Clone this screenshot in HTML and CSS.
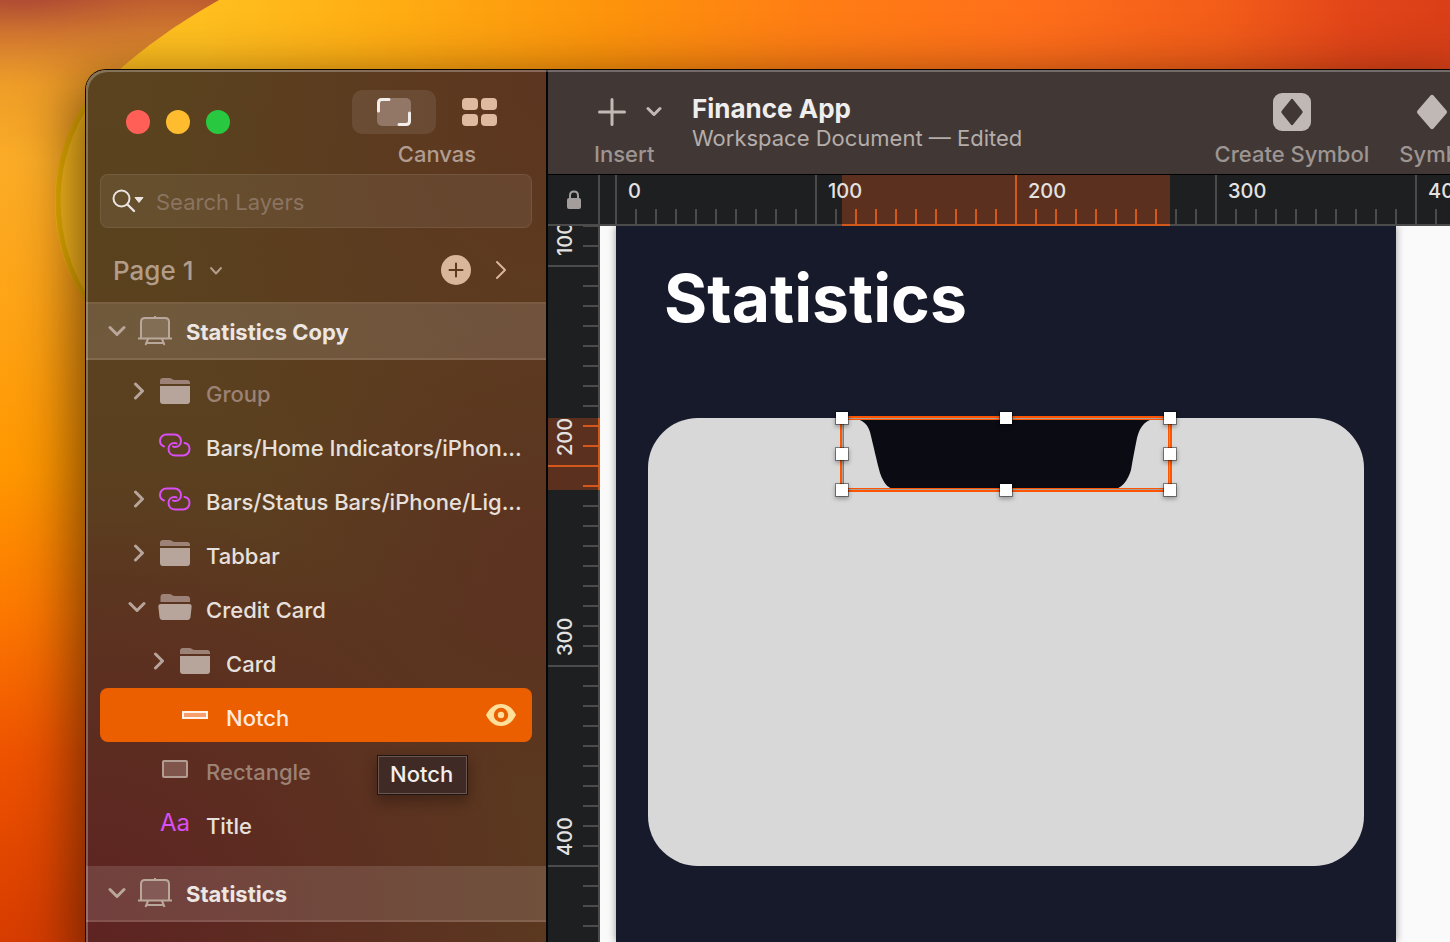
FILE: index.html
```html
<!DOCTYPE html>
<html lang="en">
<head>
<meta charset="utf-8">
<title>Finance App</title>
<link rel="stylesheet" href="styles.css">
</head>
<body>
<svg class="defs" aria-hidden="true">
  <symbol id="down" viewBox="0 0 18 12"><path d="M2 2.500 9 9.500 16 2.500" fill="none" stroke="currentColor" stroke-width="3" stroke-linecap="round" stroke-linejoin="round"/></symbol>
  <symbol id="right" viewBox="0 0 12 18"><path d="M2.500 2 9.500 9 2.500 16" fill="none" stroke="currentColor" stroke-width="3" stroke-linecap="round" stroke-linejoin="round"/></symbol>
  <symbol id="folder" viewBox="0 0 34 28">
    <path d="M2 7V4Q2 1 5 1H11Q13 1 14 2T17 3H29Q32 3 32 6V7Z" fill="#9d8377"/>
    <path d="M2 9H32V24Q32 27 29 27H5Q2 27 2 24Z" fill="#b7a59b"/>
  </symbol>
  <symbol id="folder-open" viewBox="0 0 34 28">
    <path d="M2.500 9V4Q2.500 1 5.500 1H11Q13 1 14 2T17 3H29Q32 3 32 6V9Z" fill="#9d8377"/>
    <path d="M3 11H31Q34 11 33.600 14L32.500 24Q32 27 29.500 27H4.500Q2 27 1.500 24L.4 14Q0 11 3 11Z" fill="#b7a59b"/>
  </symbol>
  <symbol id="artboard" viewBox="0 0 34 30">
    <path d="M3 22V6Q3 2 7 2H27Q31 2 31 6V22Z" fill="#ffffff" fill-opacity=".13"/>
    <path d="M3 22V6Q3 2 7 2H27Q31 2 31 6V22M0 22.500H34M17 0V2M10 23 7.500 29M24 23 26.500 29M9 27H25" fill="none" stroke="#baa79b" stroke-width="2"/>
  </symbol>
  <symbol id="link" viewBox="0 0 32 24">
    <g fill="none" stroke="#d94ff5" stroke-width="2" stroke-linecap="round">
      <path d="M5 13.500C2.500 12.500 1 10.500 1 8C1 4 4 1.500 7.500 1.500H15.500C19.500 1.500 22 4.500 22 8C22 11.500 19.500 14 16 14Q14.500 14 14 13.500"/>
      <path d="M25.500 10C28.500 10.500 30.500 13 30.500 16C30.500 20 27.500 22.500 24 22.500H16.500C12.500 22.500 9.500 20 9.500 16C9.500 12.500 12 10 15.500 10Q17 10 17.500 10.500"/>
    </g>
  </symbol>
</svg>

<svg class="wallpaper" viewBox="0 0 1450 942" preserveAspectRatio="none" aria-hidden="true">
  <defs>
    <linearGradient id="base" x1="0" y1="0" x2="0" y2="1">
      <stop offset="0" stop-color="#b9562f"/><stop offset=".03" stop-color="#cf7630"/><stop offset=".09" stop-color="#ee9d28"/><stop offset=".17" stop-color="#fbac27"/>
      <stop offset=".32" stop-color="#fea417"/><stop offset=".5" stop-color="#ff9700"/><stop offset=".65" stop-color="#fc7800"/><stop offset=".8" stop-color="#ee5300"/><stop offset="1" stop-color="#d73c00"/>
    </linearGradient>
    <linearGradient id="petal" gradientUnits="userSpaceOnUse" x1="200" y1="40" x2="1450" y2="90">
      <stop offset="0" stop-color="#ffbf1f"/><stop offset=".14" stop-color="#ffae13"/><stop offset=".32" stop-color="#fd940b"/><stop offset=".48" stop-color="#ff7e14"/><stop offset=".66" stop-color="#ff6f1a"/><stop offset=".82" stop-color="#f25c19"/><stop offset=".92" stop-color="#e24519"/><stop offset="1" stop-color="#d93f18"/>
    </linearGradient>
    <radialGradient id="dusk" gradientUnits="userSpaceOnUse" cx="0" cy="0" r="1" gradientTransform="translate(20 -22) scale(230 85)">
      <stop offset="0" stop-color="#a53d37"/><stop offset=".3" stop-color="#b04d34" stop-opacity=".8"/><stop offset="1" stop-color="#e08a2b" stop-opacity="0"/>
    </radialGradient>
  </defs>
  <rect width="1450" height="942" fill="url(#base)"/>
  <rect width="400" height="120" fill="url(#dusk)"/>
  <path d="M219 0C175 25 145 47 118 71C75 110 55 155 55 200C55 245 68 278 90 306H1450V0Z" fill="url(#petal)"/>
  <path d="M92 96C68 130 58 165 58 200C58 240 70 275 90 304" fill="none" stroke="#e8b000" stroke-width="5"/>
</svg>

<div class="desktop">
  <div class="window">
    <aside class="sidebar">
      <header class="titlebar">
        <div class="lights">
          <button class="light close" aria-label="Close"></button>
          <button class="light minimise" aria-label="Minimise"></button>
          <button class="light zoom" aria-label="Zoom"></button>
        </div>
        <div class="views">
          <div class="view-buttons">
            <button class="view active" aria-label="Canvas view">
              <svg width="34" height="28" viewBox="0 0 34 28"><rect width="34" height="28" rx="5" fill="#927767"/><path d="M1.500 13V5Q1.500 1.500 5 1.500H12M32.500 15V23Q32.500 26.500 29 26.500H22" fill="none" stroke="#f3eeea" stroke-width="3" stroke-linecap="round"/></svg>
            </button>
            <button class="view" aria-label="Components view">
              <svg width="36" height="28" viewBox="0 0 36 28" fill="#dfb9a0"><rect width="16" height="12" rx="4"/><rect x="19" width="16" height="12" rx="4"/><rect y="16" width="16" height="12" rx="4"/><rect x="19" y="16" width="16" height="12" rx="4"/></svg>
            </button>
          </div>
          <span class="caption">Canvas</span>
        </div>
      </header>

      <label class="search">
        <svg width="32" height="24" viewBox="0 0 32 24"><circle cx="9.500" cy="9.500" r="8" fill="none" stroke="#ece4e0" stroke-width="2"/><path d="M15.500 15.500 22 22" stroke="#ece4e0" stroke-width="2.400" stroke-linecap="round"/><path d="M23 8.500H31L27 13.500Z" fill="#ece4e0" stroke="#ece4e0" stroke-linejoin="round"/></svg>
        <input type="search" placeholder="Search Layers" aria-label="Search Layers">
      </label>

      <div class="page">
        <button class="page-name">Page 1 <svg width="14" height="10" viewBox="0 0 14 10"><path d="M2 2 7 7.500 12 2" fill="none" stroke="currentColor" stroke-width="2" stroke-linecap="round" stroke-linejoin="round"/></svg></button>
        <button class="add" aria-label="Add page"><svg width="30" height="30" viewBox="0 0 30 30"><circle cx="15" cy="15" r="15" fill="#d9b599"/><path d="M15 8.500V21.500M8.500 15H21.500" stroke="#5b3a20" stroke-width="2" stroke-linecap="round"/></svg></button>
        <button class="next" aria-label="Show pages"><svg width="12" height="20" viewBox="0 0 12 20"><path d="M2 2 10 10 2 18" fill="none" stroke="#d9b599" stroke-width="2" stroke-linecap="round" stroke-linejoin="round"/></svg></button>
      </div>

      <h2 class="artboard-row first">
        <button class="toggle" aria-label="Collapse Statistics Copy"><svg width="18" height="12"><use href="#down"/></svg></button>
        <svg class="board" width="34" height="30"><use href="#artboard"/></svg>
        <span>Statistics Copy</span>
      </h2>
      <ul class="layers">
        <li class="layer dim">
          <button class="toggle" aria-label="Expand Group"><svg width="12" height="18"><use href="#right"/></svg></button>
          <svg class="kind" width="34" height="28"><use href="#folder"/></svg><span class="name">Group</span>
        </li>
        <li class="layer">
          <span class="toggle"></span>
          <svg class="kind" width="32" height="24"><use href="#link"/></svg><span class="name">Bars/Home Indicators/iPhon...</span>
        </li>
        <li class="layer">
          <button class="toggle" aria-label="Expand status bar"><svg width="12" height="18"><use href="#right"/></svg></button>
          <svg class="kind" width="32" height="24"><use href="#link"/></svg><span class="name">Bars/Status Bars/iPhone/Lig...</span>
        </li>
        <li class="layer">
          <button class="toggle" aria-label="Expand Tabbar"><svg width="12" height="18"><use href="#right"/></svg></button>
          <svg class="kind" width="34" height="28"><use href="#folder"/></svg><span class="name">Tabbar</span>
        </li>
        <li class="layer">
          <button class="toggle open" aria-label="Collapse Credit Card"><svg width="18" height="12"><use href="#down"/></svg></button>
          <svg class="kind" width="34" height="28"><use href="#folder-open"/></svg><span class="name">Credit Card</span>
        </li>
        <li class="layer nested">
          <button class="toggle" aria-label="Expand Card"><svg width="12" height="18"><use href="#right"/></svg></button>
          <svg class="kind" width="34" height="28"><use href="#folder"/></svg><span class="name">Card</span>
        </li>
        <li class="layer nested selected">
          <span class="toggle"></span>
          <svg class="kind" width="34" height="28" viewBox="0 0 34 28"><rect x="5" y="11" width="24" height="6" fill="#f79e6c" stroke="#fff3ec" stroke-width="2"/></svg><span class="name">Notch</span>
          <button class="eye" aria-label="Hide layer"><svg width="30" height="24" viewBox="0 0 30 24"><path d="M0 12C4 4 9.500 1 15 1S26 4 30 12C26 20 20.500 23 15 23S4 20 0 12Z" fill="#ffdf9a"/><circle cx="15" cy="12" r="5.200" fill="#ffdf9a" stroke="#eb5f00" stroke-width="4"/></svg></button>
          <span class="tooltip" role="tooltip">Notch</span>
        </li>
        <li class="layer dim">
          <span class="toggle"></span>
          <svg class="kind" width="34" height="28" viewBox="0 0 34 28"><rect x="5" y="6" width="24" height="16" rx="1" fill="#80564c" stroke="#b39d93" stroke-width="2"/></svg><span class="name">Rectangle</span>
        </li>
        <li class="layer">
          <span class="toggle"></span>
          <span class="kind type">Aa</span><span class="name">Title</span>
        </li>
      </ul>
      <h2 class="artboard-row">
        <button class="toggle" aria-label="Collapse Statistics"><svg width="18" height="12"><use href="#down"/></svg></button>
        <svg class="board" width="34" height="30"><use href="#artboard"/></svg>
        <span>Statistics</span>
      </h2>
    </aside>

    <main class="main">
      <header class="toolbar">
        <button class="tool insert">
          <span class="tool-icon">
            <svg width="28" height="28" viewBox="0 0 28 28"><path d="M14 1.500V26.500M1.500 14H26.500" stroke="#c3b9b5" stroke-width="3" stroke-linecap="round"/></svg>
            <svg width="16" height="12" viewBox="0 0 16 12"><path d="M2 2.500 8 8.500 14 2.500" fill="none" stroke="#c3b9b5" stroke-width="3" stroke-linecap="round" stroke-linejoin="round"/></svg>
          </span>
          <span class="caption">Insert</span>
        </button>
        <div class="document">
          <h1>Finance App</h1>
          <p>Workspace Document — Edited</p>
        </div>
        <button class="tool create">
          <span class="tool-icon"><svg width="38" height="38" viewBox="0 0 38 38"><rect width="38" height="38" rx="9" fill="#c0b8b5"/><path d="M17.500 7Q19 4.500 20.500 7L29 17.500Q30.500 19 29 20.500L20.500 31Q19 33.500 17.500 31L9 20.500Q7.500 19 9 17.500Z" fill="#413835"/></svg></span>
          <span class="caption">Create Symbol</span>
        </button>
        <button class="tool symbols">
          <span class="tool-icon"><svg width="30" height="36" viewBox="0 0 30 36"><path d="M13.500 1.500Q15 0 16.500 1.500L29 16Q31 18 29 20L16.500 34.500Q15 36 13.500 34.500L1 20Q-1 18 1 16Z" fill="#c0b8b5"/></svg></span>
          <span class="caption">Symbols</span>
        </button>
      </header>

      <div class="workspace">
        <button class="lock" aria-label="Lock rulers"><svg width="16" height="20" viewBox="0 0 16 20"><path d="M4 9V5.500C4 3 5.500 1.500 8 1.500S12 3 12 5.500V9" fill="none" stroke="#a39e9c" stroke-width="2"/><rect x="1" y="8" width="14" height="11" rx="2" fill="#a39e9c"/></svg></button>
        <div class="ruler-x">
          <div class="range-x"></div>
          <span class="mark">0</span><span class="mark">100</span><span class="mark">200</span><span class="mark">300</span><span class="mark">400</span>
        </div>
        <div class="ruler-y">
          <div class="range-y"></div>
          <span class="mark">100</span><span class="mark">200</span><span class="mark">300</span><span class="mark">400</span>
        </div>
        <div class="canvas">
          <section class="artboard">
            <h2>Statistics</h2>
            <div class="card">
              <div class="selection">
                <svg width="328" height="72" viewBox="0 0 328 72"><path d="M6 0C18 0 25 4 28 14C31 26 35 44 38 55C42 66 46 72 58 72H268C280 72 286 62 289 52C291 40 293 30 295 20C298 8 304 0 318 0Z" fill="#0b0b14"/></svg>
                <i class="handle n w"></i><i class="handle n"></i><i class="handle n e"></i>
                <i class="handle w"></i><i class="handle e"></i>
                <i class="handle s w"></i><i class="handle s"></i><i class="handle s e"></i>
              </div>
            </div>
          </section>
        </div>
      </div>
    </main>
  </div>
</div>
</body>
</html>
```

FILE: styles.css
```css
* { box-sizing: border-box; }

body {
  margin: 0;
  height: 100vh;
  overflow: hidden;
  background: #ee5300;
  color: #e8e0dc;
  font: 500 22px/28px Inter, "Liberation Sans", sans-serif;
}

h1, h2, p, ul { margin: 0; padding: 0; font: inherit; }
ul { list-style: none; }
button { padding: 0; border: 0; background: none; color: inherit; font: inherit; }
svg { display: block; flex: none; }

.defs { position: absolute; width: 0; height: 0; }
.wallpaper { position: absolute; inset: 0; width: 100%; height: 100%; }

.desktop {
  position: relative;
  display: flex;
  height: 100vh;
  padding: 70px 0 0 86px;
}

.window {
  position: relative;
  display: flex;
  flex: 1;
  min-width: 0;
  border-radius: 20px 0 0 0;
  box-shadow: 0 0 0 1px #0b0604, 0 22px 56px 12px rgba(40, 20, 0, .62);
}

/* Light rim along the window edge */
.window::after {
  content: "";
  position: absolute;
  inset: 0;
  border-radius: inherit;
  box-shadow: inset 2px 2px 0 rgba(255, 255, 255, .26);
  pointer-events: none;
}

/* Sidebar */
.sidebar {
  flex: none;
  width: 462px;
  border-right: 2px solid #050505;
  border-radius: 20px 0 0 0;
  overflow: hidden;
  background:
    radial-gradient(280px 240px at 100% 56%, rgba(92, 44, 34, .6), transparent),
    radial-gradient(400px 600px at 100% 0, #5d3520, transparent),
    radial-gradient(460px 420px at 0 98%, #5e2322, transparent),
    linear-gradient(#5a431e, #5b401f 45%, #5b381f 65%, #5b3820);
}

.titlebar {
  display: flex;
  justify-content: space-between;
  height: 104px;
  padding: 20px 24px 0 40px;
}
.lights { display: flex; gap: 16px; padding-top: 20px; }
.light { width: 24px; height: 24px; border-radius: 50%; }
.close { background: #ff5f57; }
.minimise { background: #febc2e; }
.zoom { background: #28c840; }
.views { text-align: center; }
.view-buttons { display: flex; gap: 2px; }
.view {
  display: grid;
  place-items: center;
  width: 84px;
  height: 44px;
  border-radius: 10px;
}
.view.active { background: rgba(255, 255, 255, .09); }
.caption { display: block; margin-top: 6px; color: #b19c90; }

.search {
  display: flex;
  align-items: center;
  gap: 12px;
  height: 54px;
  margin: 0 14px;
  padding: 0 11px;
  border: 1px solid rgba(255, 255, 255, .08);
  border-radius: 8px;
  background: rgba(255, 255, 255, .07);
}
.search input {
  flex: 1;
  min-width: 0;
  padding: 2px 0 0;
  border: 0;
  outline: 0;
  background: none;
  color: inherit;
  font: inherit;
  font-weight: 400;
}
.search input::placeholder { color: #8a7461; opacity: 1; }

.page {
  display: flex;
  align-items: center;
  gap: 24px;
  height: 74px;
  padding: 10px 39px 0 27px;
}
.page-name {
  display: flex;
  align-items: center;
  gap: 16px;
  margin-right: auto;
  padding-top: 2px;
  color: #b29d8b;
  font-size: 26px;
}

.artboard-row {
  display: flex;
  align-items: center;
  height: 56px;
  padding-left: 22px;
  border-bottom: 2px solid rgba(255, 235, 225, .24);
  background: rgba(255, 255, 255, .13);
  background-clip: padding-box;
  color: #ede6e2;
  font-weight: 700;
}
.artboard-row.first { height: 58px; border-top: 2px solid rgba(255, 235, 225, .18); }
.artboard-row .toggle { color: #baa79b; }
.artboard-row span { padding-top: 2px; }
.board { margin: 0 14px 0 12px; }

.layers { padding: 4px 14px 16px; }
.layer {
  position: relative;
  display: flex;
  align-items: center;
  height: 54px;
  padding-left: 28px;
  border-radius: 8px;
}
.layer.nested { padding-left: 48px; }
.layer .toggle { display: flex; justify-content: flex-end; flex: none; width: 17px; margin-right: 3px; color: #b7a59b; }
.layer .toggle.open { justify-content: center; }
.kind { flex: none; width: 34px; margin: 0 14px 0 10px; }
.type { color: #d94ff5; text-align: center; font-weight: 400; font-size: 24px; }
.name { flex: 1; min-width: 0; padding-top: 6px; overflow: hidden; white-space: nowrap; }
.dim .name { color: #9c8275; }
.selected { background: #eb5f00; color: #ffe9dd; }
.eye { margin-right: 16px; }

.tooltip {
  position: absolute;
  z-index: 1;
  top: 68px;
  left: 278px;
  padding: 3px 13px 5px 11px;
  border: 1px solid #6b5650;
  outline: 1px solid #1f1512;
  background: #3f2a25;
  color: #f3efed;
  box-shadow: 0 6px 14px 2px rgba(0, 0, 0, .28);
}

/* Main area */
.main { display: flex; flex-direction: column; flex: 1; min-width: 0; overflow: hidden; }

.toolbar {
  display: flex;
  flex: none;
  height: 105px;
  padding-left: 46px;
  border-bottom: 1px solid #000;
  background: #413835;
}
.tool { display: flex; flex-direction: column; flex: none; padding-top: 20px; }
.tool-icon { display: flex; align-items: center; height: 44px; }
.toolbar .caption { color: #9d9592; }
.insert .tool-icon { gap: 20px; padding-left: 4px; }
.insert .caption { text-align: left; }
.document { flex: 1; min-width: 0; padding: 22px 0 0 30px; white-space: nowrap; }
.document h1 { color: #f0eeed; font-size: 26px; line-height: 34px; font-weight: 700; }
.document p { color: #b5adaa; line-height: 24px; font-weight: 400; }
.create { align-items: center; margin-right: 30px; }
.symbols { margin-right: -40px; }
.symbols .tool-icon { padding-left: 18px; }

.workspace {
  display: grid;
  flex: 1;
  grid-template: 51px minmax(0, 1fr) / 52px minmax(0, 1fr);
  min-height: 0;
  background: #1d1f21;
}
.lock {
  display: grid;
  place-items: center;
  padding-left: 2px;
  border-right: 2px solid #4b4b4c;
  border-bottom: 2px solid #4b4b4c;
}

.ruler-x, .ruler-y {
  position: relative;
  display: flex;
  overflow: clip;
  overflow-clip-margin: border-box;
  color: #e4e2e1;
  font-size: 20px;
  line-height: 24px;
}
.mark { position: relative; flex: none; }

.ruler-x {
  padding-left: 15px;
  border-bottom: 2px solid #4b4b4c;
  background: repeating-linear-gradient(90deg, #4b4b4c 0 2px, transparent 2px 20px) 15px 100% / 100% 15px no-repeat;
}
.ruler-x .mark { width: 200px; padding: 4px 0 0 11px; border-left: 2px solid #4b4b4c; }
.ruler-x .mark:nth-of-type(3) { border-color: #d4581b; }
.range-x {
  position: absolute;
  inset: 0 auto -2px 242px;
  width: 328px;
  background:
    linear-gradient(#d4581b, #d4581b) 0 100% / 100% 2px no-repeat,
    repeating-linear-gradient(90deg, transparent 0 13px, #d4581b 13px 15px, transparent 15px 20px) 0 100% / 100% 17px no-repeat,
    #5b301e;
}

.ruler-y {
  flex-direction: column;
  border-right: 2px solid #4b4b4c;
  background: repeating-linear-gradient(#4b4b4c 0 2px, transparent 2px 20px) 100% -1px / 15px 100% no-repeat;
}
.ruler-y .mark {
  height: 200px;
  padding: 9px 5px 0 0;
  border-top: 2px solid #4b4b4c;
  writing-mode: vertical-rl;
  transform: rotate(180deg);
}
.ruler-y .mark:first-of-type { margin-top: -159px; }
.ruler-y .mark:nth-of-type(2) { border-color: #d4581b; }
.range-y {
  position: absolute;
  inset: 192px -2px auto 0;
  height: 72px;
  background:
    linear-gradient(#d4581b, #d4581b) 100% 0 / 2px 100% no-repeat,
    repeating-linear-gradient(transparent 0 7px, #d4581b 7px 9px, transparent 9px 20px) 100% 0 / 17px 100% no-repeat,
    #5b301e;
}

.canvas { padding: 0 16px; overflow: hidden; background: #fafafa; }
.artboard {
  width: 780px;
  height: 100%;
  padding: 34px 32px 0;
  background: #171a2b;
  box-shadow: 0 0 8px rgba(0, 0, 0, .4);
}
.artboard h2 {
  padding-left: 16px;
  color: #fff;
  font-size: 66px;
  line-height: 76px;
  font-weight: 700;
}
.card {
  height: 448px;
  margin-top: 82px;
  padding-left: 194px;
  border-radius: 50px;
  background: #d8d8d8;
}
.selection { position: relative; width: 328px; height: 72px; }
.selection::before {
  content: "";
  position: absolute;
  inset: -2px;
  border: 4px solid #ff5400;
}
.selection::after {
  content: "";
  position: absolute;
  inset: 0;
  border: 1px solid #a9a19d;
}
.handle {
  position: absolute;
  z-index: 1;
  top: 30px;
  left: 158px;
  width: 12px;
  height: 12px;
  background: #fff;
  box-shadow: 0 0 0 1px rgba(0, 0, 0, .4), 0 2px 4px 1px rgba(0, 0, 0, .3);
}
.handle.n { top: -6px; }
.handle.s { top: 66px; }
.handle.w { left: -6px; }
.handle.e { left: 322px; }
```
